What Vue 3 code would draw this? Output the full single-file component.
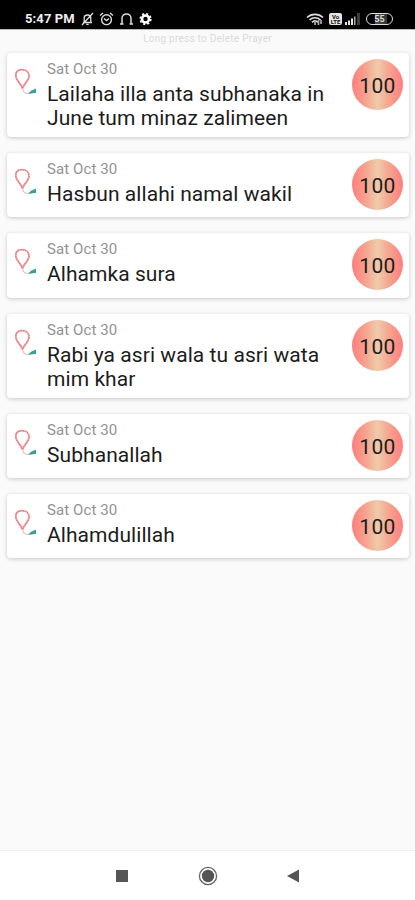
<script setup>
const prayers = [
  { lines: ['Lailaha illa anta subhanaka in', 'June tum minaz zalimeen'] },
  { lines: ['Hasbun allahi namal wakil'] },
  { lines: ['Alhamka sura'] },
  { lines: ['Rabi ya asri wala tu asri wata', 'mim khar'] },
  { lines: ['Subhanallah'] },
  { lines: ['Alhamdulillah'] },
]
</script>

<template>
  <div class="screen">
    <header class="status">
      <span class="time">5:47 PM</span>
      <svg class="bell" width="13" height="14" viewBox="0 0 13 14" fill="none" stroke="#ddd" stroke-width="1.3">
        <path d="M2 10.5h9M3.2 10V6c0-4 6.600-4 6.600 0v4M5.300 12.400h2.400M1 13L12 1" />
      </svg>
      <svg class="alarm" width="15" height="14" viewBox="0 0 15 14" fill="none" stroke="#ddd" stroke-width="1.4">
        <circle cx="7.500" cy="7.700" r="4.900" />
        <path d="M1 3.500L4 1M14 3.500L11 1M5 6.500l2.500 2L10 6.500" />
      </svg>
      <svg class="phones" width="15" height="14" viewBox="0 0 15 14" fill="none" stroke="#ddd" stroke-width="1.5">
        <path d="M3 12V6.500c0-6 9-6 9 0V12M1 12h3.500M10.500 12H14" />
      </svg>
      <svg class="gear" width="13" height="14" viewBox="0 0 13 14" fill="none" stroke="#fff">
        <circle cx="6.500" cy="7" r="3.500" stroke-width="2.600" />
        <circle cx="6.500" cy="7" r="5.300" stroke-width="1.600" stroke-dasharray="2.160 2" />
      </svg>
      <span class="spacer"></span>
      <svg class="wifi" width="18" height="13" viewBox="0 0 18 13" fill="none" stroke="#ddd" stroke-width="1.700">
        <path d="M1 4.500c4.500-4.300 11.500-4.300 16 0M3.500 7c3.200-3 7.800-3 11 0M6 9.300c1.800-1.600 4.200-1.600 6 0" />
        <path d="M9 12V7.500M12.500 12V7M15 7v4" stroke="#aaa" />
      </svg>
      <span class="volte"><b>Vo</b><b>LTE</b></span>
      <svg class="signal" width="16" height="12" viewBox="0 0 16 12">
        <path fill="#e5e5e5" d="M0 9h2v3H0zM3 7.500h2V12H3zM6 5.500h2V12H6z" />
        <path fill="#aaa" d="M9 3.500h1.500V12H9z" />
        <path fill="#3c3c3c" d="M12 0h3v12h-3z" />
      </svg>
      <span class="battery"><b>55</b></span>
    </header>

    <main class="content">
      <p class="hint">Long press to Delete Prayer</p>
      <ul class="list">
        <li v-for="(p, i) in prayers" :key="i" class="card">
          <svg class="beads" width="24" height="28" viewBox="0 0 24 28" fill="none">
            <path d="M8.500 20.500C7.500 16 1.800 12.500 1.800 7.500C1.800 3.500 4.500 1.700 8 1.700C12 1.700 15 4 15 8C15 13 9.500 16 8.500 20.500" stroke="#f2a0a5" stroke-width="1.800" />
            <path d="M8.500 20.500C7.500 16 1.800 12.500 1.800 7.500C1.800 3.500 4.500 1.700 8 1.700C12 1.700 15 4 15 8C15 13 9.500 16 8.500 20.500" stroke="#e57c83" stroke-width="1.300" stroke-dasharray="1.500 1" />
            <path d="M8.500 20c.3 3 1.300 4.700 3.500 5.200h3" stroke="#f0b5b2" stroke-width="1.100" />
            <path d="M14.300 25.400l2.700-2.700 5-2.200v4.600c-2.600-.4-5.200 1.300-7.700.3z" fill="#3b9f98" />
          </svg>
          <div class="body">
            <span class="date">Sat Oct 30</span>
            <span v-for="line in p.lines" :key="line" class="title">{{ line }}</span>
          </div>
          <span class="count">100</span>
        </li>
      </ul>
    </main>

    <nav class="nav">
      <svg width="14" height="14" viewBox="0 0 14 14"><path d="M1 1h12v12H1z" fill="#555" /></svg>
      <svg width="20" height="20" viewBox="0 0 20 20">
        <circle cx="10" cy="10" r="8.600" fill="none" stroke="#666" stroke-width="1.300" />
        <circle cx="10" cy="10" r="6.200" fill="#555" />
      </svg>
      <svg width="14" height="14" viewBox="0 0 14 14"><path d="M1 7L13 .5v13z" fill="#555" /></svg>
    </nav>
  </div>
</template>

<style>
body {
  margin: 0;
  background: #fafafa;
}
</style>

<style scoped>
.screen {
  display: flex;
  flex-direction: column;
  width: 415px;
  height: 900px;
  overflow: hidden;
  background: #fafafa;
  font-family: Roboto, "Liberation Sans", sans-serif;
}
.status {
  box-sizing: border-box;
  display: flex;
  align-items: center;
  height: 29px;
  padding: 9px 22px 0 25px;
  background: #000;
  flex: none;
}
.time {
  width: 56px;
  font-size: 13px;
  line-height: 20px;
  letter-spacing: 0.1px;
  font-weight: 700;
  color: #eee;
  white-space: nowrap;
}
.bell { margin-right: 5px; }
.alarm { margin-right: 5px; }
.phones { margin-right: 5px; }
.spacer { flex: 1; }
.wifi { margin-right: 5px; }
.volte {
  display: flex;
  flex-direction: column;
  align-items: center;
  justify-content: center;
  width: 13px;
  height: 12px;
  margin-right: 3px;
  border-radius: 2px;
  background: #e4e4e4;
  color: #111;
  font-size: 6px;
  line-height: 5.5px;
}
.signal { margin-right: 5px; }
.battery {
  box-sizing: border-box;
  display: flex;
  align-items: center;
  justify-content: center;
  width: 27px;
  height: 12px;
  border: 1.5px solid #ddd;
  border-radius: 6px;
  color: #ddd;
  background: linear-gradient(90deg, #000 30%, #555 30%, #333 80%, #000 80%);
  font-size: 9px;
  line-height: 9px;
}
.content {
  flex: 1;
  border-top: 1px solid #b8b8b8;
}
.hint {
  margin: 0;
  height: 23px;
  text-align: center;
  font-size: 10px;
  line-height: 17px;
  letter-spacing: 0.25px;
  color: #dadada;
}
.list {
  display: flex;
  flex-direction: column;
  gap: 16px;
  margin: 0;
  padding: 0 6px 0 7px;
  list-style: none;
}
.card {
  box-sizing: border-box;
  display: flex;
  align-items: flex-start;
  min-height: 64.1px;
  padding: 6px 6px 6.500px 7px;
  border-radius: 4px;
  background: #fff;
  box-shadow: 0 1px 4px rgba(0, 0, 0, 0.2);
}
.beads {
  flex: none;
  margin: 9px 9px 0 0;
}
.body {
  display: flex;
  flex: 1;
  flex-direction: column;
}
.date {
  height: 23px;
  font-size: 15px;
  line-height: 21px;
  letter-spacing: 0.1px;
  color: #929292;
}
.title {
  font-size: 21px;
  line-height: 24.400px;
  letter-spacing: 0.06px;
  color: #1c1c1c;
  white-space: nowrap;
}
.count {
  flex: none;
  width: 51px;
  height: 51px;
  border-radius: 50%;
  background: linear-gradient(90deg, #ff7d7d 0%, #f6a590 28%, #eecbab 50%, #f6a590 72%, #ff7d7d 100%);
  color: #1c1c1c;
  font-size: 21px;
  line-height: 54px;
  letter-spacing: 0.3px;
  text-align: center;
}
.nav {
  box-sizing: border-box;
  display: flex;
  align-items: center;
  justify-content: space-between;
  height: 50px;
  padding: 1px 115px 0;
  border-top: 1px solid #f0f0f0;
  background: #fff;
  flex: none;
}
</style>
